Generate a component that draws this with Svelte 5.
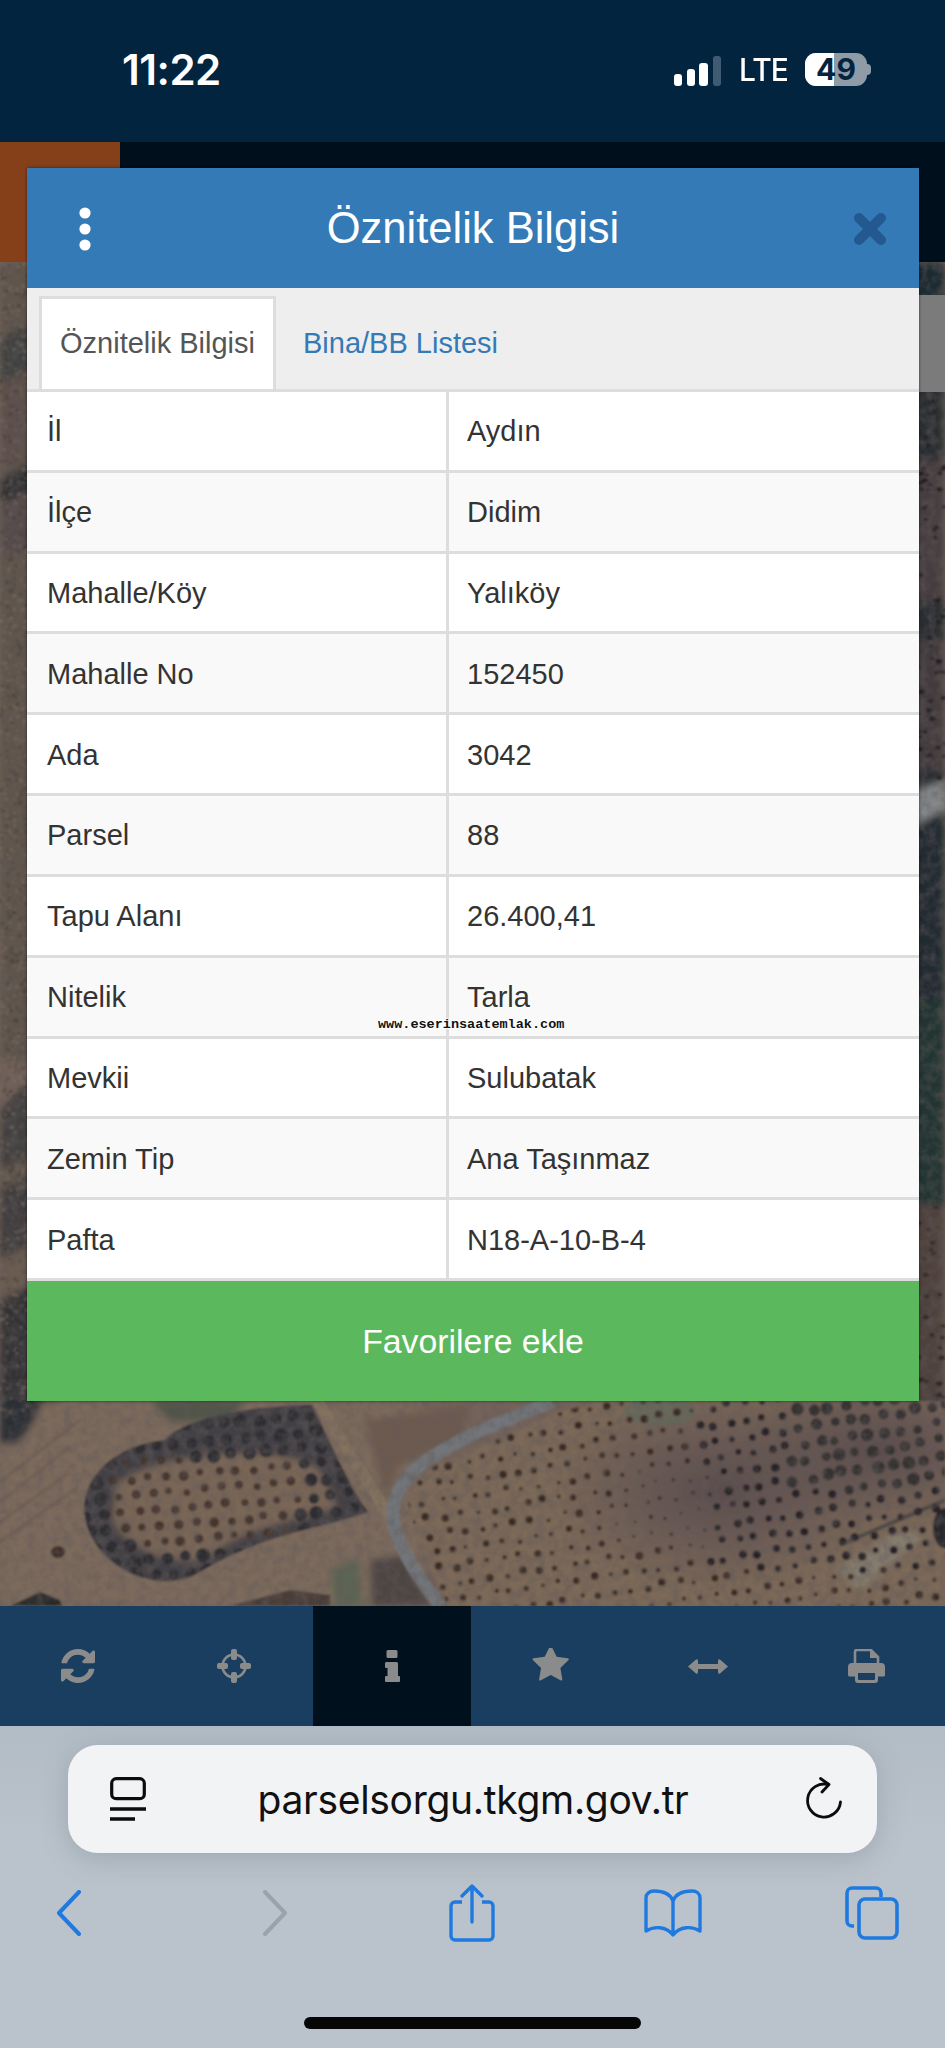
<script>
  const rows = [
    ['İl', 'Aydın'], ['İlçe', 'Didim'], ['Mahalle/Köy', 'Yalıköy'], ['Mahalle No', '152450'],
    ['Ada', '3042'], ['Parsel', '88'], ['Tapu Alanı', '26.400,41'], ['Nitelik', 'Tarla'],
    ['Mevkii', 'Sulubatak'], ['Zemin Tip', 'Ana Taşınmaz'], ['Pafta', 'N18-A-10-B-4']
  ];
  let seed = 12345;
  const r = () => (seed = (seed * 16807) % 2147483647) / 2147483647;

  const fieldDots = [];
  for (let i = -4; i < 40; i++) for (let j = -8; j < 28; j++) {
    const x = 400 + i * 16.5 + j * 3.5 + r() * 6;
    const y = 1400 + j * 16.5 - i * 2.5 + r() * 6;
    const big = x > 790 && y < 1490;
    const mid = x > 700 && y < 1570;
    const small = x > 610 && x < 710 && y > 1470 && y < 1550;
    fieldDots.push({ x, y, rad: big ? 4.2 + r() * 2.4 : small ? 1 + r() * 1.3 : mid ? 2.8 + r() * 1.6 : 1.8 + r() * 2.2, fill: big ? '#353133' : mid ? '#272226' : '#382b24' });
  }
  const orchardDots = [];
  for (let i = -2; i < 20; i++) for (let j = -2; j < 14; j++) {
    const x = 95 + i * 17.5 + j * 4 + r() * 4;
    const y = 1415 + j * 16 - i * 1.5 + r() * 4;
    const upper = y < 1458 || x > 300 || y > 1545 || x < 112;
    orchardDots.push({ x, y, rad: upper ? 5 + r() * 2.5 : 3.4 + r() * 1.8, fill: upper ? '#2f2e33' : '#44362d' });
  }
  const edgeSpecks = [];
  for (let k = 0; k < 1300; k++) {
    edgeSpecks.push({ x: r() * 28, y: 262 + r() * 1150, rad: 0.7 + r() * 1.3, fill: r() > 0.5 ? '#7f7366' : '#3e3732' });
  }
  const rightDots = [];
  for (let k = 0; k < 110; k++) {
    const y = 395 + r() * 1010;
    if (y > 780 && y < 1205) continue;
    rightDots.push({ x: 918 + r() * 28, y, rad: 1.3 + r() * 1.2 });
  }
</script>

<div class="page">
  <header class="status">
    <span class="time">11:22</span>
    <div class="status-right">
      <svg class="signal" width="47" height="30" viewBox="0 0 47 30" aria-hidden="true">
        <rect x="0" y="18" width="8" height="12" rx="3" fill="#fff" />
        <rect x="13" y="13" width="8" height="17" rx="3" fill="#fff" />
        <rect x="25" y="7" width="9" height="23" rx="3" fill="#fff" />
        <rect x="39" y="0" width="8" height="30" rx="3" fill="#3f5a73" />
      </svg>
      <span class="lte">LTE</span>
      <div class="battery"><span class="batt-fill"></span><span class="batt-num">49</span></div>
      <span class="nub"></span>
    </div>
  </header>

  <main class="stage">
    <div class="topstrip"><span class="orange"></span></div>

    <svg class="map" viewBox="0 262 945 1344" preserveAspectRatio="none" aria-hidden="true">
      <defs>
        <filter id="soft" x="-5%" y="-5%" width="110%" height="110%"><feGaussianBlur stdDeviation="1.2" /></filter>
        <filter id="softer" x="-5%" y="-5%" width="110%" height="110%"><feGaussianBlur stdDeviation="3.5" /></filter>
        <filter id="grain" x="0" y="0" width="100%" height="100%">
          <feTurbulence type="fractalNoise" baseFrequency="0.11" numOctaves="3" seed="4" />
          <feColorMatrix values="0 0 0 0 0.12  0 0 0 0 0.1  0 0 0 0 0.1  1.8 0 0 0 -0.62" />
        </filter>
        <clipPath id="field"><polygon points="405,1492 430,1468 560,1412 600,1401 945,1401 945,1606 448,1606 420,1545" /></clipPath>
        <clipPath id="blob"><path d="M85 1500 C90 1470 120 1445 165 1440 C180 1420 250 1405 312 1405 C330 1440 345 1480 368 1512 C320 1530 270 1530 200 1572 C170 1590 130 1580 105 1555 C90 1540 82 1520 85 1500Z" /></clipPath>
        <radialGradient id="purple" cx="0.5" cy="0.5" r="0.5">
          <stop offset="0" stop-color="#5a4c4e" /><stop offset="1" stop-color="#5a4c4e" stop-opacity="0" />
        </radialGradient>
      </defs>
      <g filter="url(#soft)">
        <rect x="0" y="262" width="945" height="1344" fill="#75645a" />
        <g filter="url(#softer)">
          <!-- left edge strip -->
          <rect x="0" y="262" width="60" height="800" fill="#5f544b" />
          <polygon points="0,340 60,310 60,360 0,382" fill="#3c403f" />
          <polygon points="0,382 60,360 60,450 0,470" fill="#5d504b" />
          <polygon points="0,478 60,452 60,478 0,505" fill="#2f2f30" />
          <polygon points="0,505 60,478 60,540 0,560" fill="#574b4b" />
          <polygon points="0,1110 60,1050 60,1140 0,1170" fill="#423f3f" />
          <polygon points="0,1170 60,1140 60,1160 0,1190" fill="#5f5448" />
          <polygon points="0,1190 60,1160 60,1230 0,1260" fill="#403e3f" />
          <polygon points="0,1260 60,1230 60,1270 0,1300" fill="#6a5c50" />
          <polygon points="0,1300 60,1270 60,1410 0,1410" fill="#303036" />
          <!-- right edge strip -->
          <rect x="905" y="262" width="40" height="1150" fill="#2c2e33" />
          <rect x="905" y="262" width="40" height="40" fill="#1b2c30" />
          <rect x="905" y="460" width="40" height="140" fill="#463e40" />
          <rect x="905" y="640" width="40" height="130" fill="#433b3e" />
          <polygon points="905,795 945,780 945,810 905,830" fill="#84888a" />
          <polygon points="905,830 945,810 945,1000 905,1000" fill="#222c33" />
          <rect x="905" y="1000" width="40" height="205" fill="#203532" />
          <rect x="905" y="1205" width="40" height="210" fill="#4f433c" />
          <!-- left field and patches -->
          <rect x="0" y="1401" width="420" height="205" fill="#7c6a5c" />
          <path d="M0 1396 H45 L32 1425 L18 1444 H0Z" fill="#2c2d36" />
          <path d="M150 1400 H245 L230 1422 H170Z" fill="#4f5449" />
          <path d="M365 1420 L470 1405 L460 1440 L400 1465 L385 1500Z" fill="#6d5a4f" />
          <path d="M370 1560 L405 1555 L432 1606 H372Z" fill="#4e4443" />
          <path d="M330 1570 L358 1558 L363 1606 H335Z" fill="#5c6553" />
          <path d="M200 1600 L290 1558 L290 1606 H200Z" fill="#7c6a5c" />
        </g>
        {#each edgeSpecks as d}<circle cx={d.x} cy={d.y} r={d.rad} fill={d.fill} opacity="0.5" />{/each}
        {#each rightDots as d}<ellipse cx={d.x} cy={d.y} rx={d.rad + 1} ry={d.rad} fill="#17161a" opacity="0.75" />{/each}

        <path d="M0 1482 L80 1420 M0 1502 L70 1447 M0 1522 L70 1472 M0 1542 L78 1487" stroke="#6d5c52" stroke-width="3" fill="none" opacity="0.6" />

        <!-- orchard -->
        <g clip-path="url(#blob)">
          <rect x="70" y="1400" width="310" height="200" fill="#423f44" />
          <path d="M115 1485 C150 1452 285 1440 320 1470 L338 1508 C290 1522 240 1530 205 1560 C170 1566 125 1550 112 1520Z" fill="#7a6656" filter="url(#softer)" />
          {#each orchardDots as d}<circle cx={d.x} cy={d.y} r={d.rad} fill={d.fill} />{/each}
        </g>

        <path d="M318 1401 L385 1510 L425 1585" stroke="#85745f" stroke-width="11" fill="none" opacity="0.8" />
        <ellipse cx="58" cy="1552" rx="7" ry="6" fill="#3a2e26" />
        <path d="M10 1606 L40 1592 L60 1600 L62 1606Z" fill="#2c2a2a" />
        <path d="M230 1606 L290 1590 L330 1595 L330 1606Z" fill="#4a3e38" />

        <!-- right orchard field -->
        <g clip-path="url(#field)">
          <rect x="400" y="1400" width="545" height="210" fill="#7c6958" />
          <ellipse cx="720" cy="1490" rx="170" ry="100" fill="url(#purple)" />
          <ellipse cx="880" cy="1450" rx="150" ry="80" fill="url(#purple)" />
          <ellipse cx="660" cy="1412" rx="36" ry="14" fill="#5d6a5e" opacity="0.6" />
          <path d="M835 1570 L900 1530 L925 1535 L860 1590Z" fill="#8c8b80" opacity="0.55" filter="url(#softer)" />
          <path d="M840 1545 L945 1500" stroke="#3c3a3a" stroke-width="4" opacity="0.7" />
          {#each fieldDots as d}<circle cx={d.x} cy={d.y} r={d.rad} fill={d.fill} />{/each}
        </g>
        <ellipse cx="945" cy="1528" rx="12" ry="20" fill="#26262b" />

        <path d="M552 1401 C505 1422 470 1432 430 1458 C398 1480 388 1505 395 1530 C405 1560 425 1585 440 1606" stroke="#72767a" stroke-width="13" fill="none" />
      </g>
      <rect x="0" y="262" width="945" height="1344" filter="url(#grain)" opacity="0.55" />
    </svg>
    <div class="grey-panel"></div>

    <section class="modal">
      <div class="m-head">
        <svg class="m-dots" width="14" height="44" viewBox="0 0 14 44" aria-hidden="true">
          <circle cx="7" cy="6" r="5.6" fill="#fff" /><circle cx="7" cy="22" r="5.6" fill="#fff" /><circle cx="7" cy="38" r="5.6" fill="#fff" />
        </svg>
        <h1>Öznitelik Bilgisi</h1>
        <svg class="m-close" width="32" height="32" viewBox="0 0 32 32" aria-hidden="true">
          <path d="M5 5 L27 27 M27 5 L5 27" stroke="#24598f" stroke-width="10" stroke-linecap="round" />
        </svg>
      </div>
      <div class="tabs">
        <span class="tab active">Öznitelik Bilgisi</span>
        <span class="tab">Bina/BB Listesi</span>
      </div>
      <div class="table">
        {#each rows as row, i}
          <div class="row" class:alt={i % 2 === 1}>
            <span class="cell first">{row[0]}</span>
            <span class="cell">{row[1]}</span>
          </div>
        {/each}
      </div>
      <button class="fav">Favorilere ekle</button>
      <span class="watermark">www.eserinsaatemlak.com</span>
    </section>
  </main>

  <nav class="bar">
    <div class="item">
      <svg width="34" height="34" viewBox="0 0 1536 1536" aria-hidden="true"><path fill="#8b8b8b" d="M1511 928q0 5-1 7-64 268-268 434.5t-478 166.5q-146 0-282.5-55t-243.5-157l-129 129q-19 19-45 19t-45-19-19-45v-448q0-26 19-45t45-19h448q26 0 45 19t19 45-19 45l-137 137q71 66 161 102t187 36q134 0 250-65t186-179q11-17 53-117 8-23 30-23h192q13 0 22.5 9.5t9.5 22.5zm25-800v448q0 26-19 45t-45 19h-448q-26 0-45-19t-19-45 19-45l138-138q-148-137-349-137-134 0-250 65t-186 179q-11 17-53 117-8 23-30 23h-199q-13 0-22.5-9.5t-9.5-22.5v-7q65-268 270-434.5t480-166.5q146 0 284 55.5t245 156.5l130-129q19-19 45-19t45 19 19 45z" /></svg>
    </div>
    <div class="item">
      <svg width="34" height="34" viewBox="0 0 34 34" aria-hidden="true">
        <circle cx="17" cy="17" r="11.5" fill="none" stroke="#8b8b8b" stroke-width="2.6" />
        <g fill="#8b8b8b"><rect x="14" y="0" width="6" height="11" rx="2" /><rect x="14" y="23" width="6" height="11" rx="2" /><rect x="0" y="14" width="11" height="6" rx="2" /><rect x="23" y="14" width="11" height="6" rx="2" /></g>
      </svg>
    </div>
    <div class="item on">
      <svg width="15" height="32" viewBox="0 0 15 32" aria-hidden="true">
        <path fill="#8b8b8b" d="M3 0h8a1.500 1.500 0 0 1 1.500 1.500v5a1.500 1.500 0 0 1-1.500 1.500H3a1.500 1.500 0 0 1-1.500-1.500v-5A1.500 1.500 0 0 1 3 0zM1.500 12h10a1.500 1.500 0 0 1 1.500 1.500V26h1a1 1 0 0 1 1 1v4a1 1 0 0 1-1 1H1a1 1 0 0 1-1-1v-4a1 1 0 0 1 1-1h1.500v-8H1a1 1 0 0 1-1-1v-4a1.500 1.500 0 0 1 1.500-1z" />
      </svg>
    </div>
    <div class="item">
      <svg width="38" height="36" viewBox="0 128 1728 1650" aria-hidden="true"><path fill="#8b8b8b" d="M1728 647q0 22-26 48l-363 354 86 500q1 7 1 20 0 21-10.500 35.500t-30.500 14.500q-19 0-40-12l-449-236-449 236q-22 12-40 12-21 0-31.500-14.500t-10.500-35.500q0-6 2-20l86-500-364-354q-25-27-25-48 0-37 56-46l502-73 225-455q19-41 49-41t49 41l225 455 502 73q56 9 56 46z" /></svg>
    </div>
    <div class="item">
      <svg width="40" height="15" viewBox="0 0 40 15" aria-hidden="true"><path fill="#8b8b8b" d="M0 7.500 L8 0.500 Q10 -0.500 10 2 V5 H30 V2 Q30 -0.500 32 0.500 L40 7.500 L32 14.500 Q30 15.500 30 13 V10 H10 V13 Q10 15.500 8 14.500Z" /></svg>
    </div>
    <div class="item">
      <svg width="37" height="34" viewBox="0 0 37 34" aria-hidden="true">
        <path d="M7 14 V3 a2 2 0 0 1 2-2 H23 L30 8 V14" fill="none" stroke="#8b8b8b" stroke-width="2.6" />
        <path d="M22 1.500 V9 H30" fill="#8b8b8b" />
        <path fill="#8b8b8b" fill-rule="evenodd" d="M4 14 H33 a4 4 0 0 1 4 4 V26 a1.500 1.500 0 0 1-1.500 1.500 H30 V31 a3 3 0 0 1-3 3 H10 a3 3 0 0 1-3-3 V27.500 H1.500 A1.500 1.500 0 0 1 0 26 V18 a4 4 0 0 1 4-4z M10 24 V30 a1 1 0 0 0 1 1 H26 a1 1 0 0 0 1-1 V24z" />
      </svg>
    </div>
  </nav>

  <footer class="safari">
    <div class="addr">
      <svg width="36" height="44" viewBox="0 0 36 44" aria-hidden="true">
        <rect x="1.700" y="1.700" width="32.600" height="20" rx="4.500" fill="none" stroke="#0c0c0c" stroke-width="3.200" />
        <path d="M0 32 H36 M0 42 H25" stroke="#0c0c0c" stroke-width="3.600" />
      </svg>
      <span class="url">parselsorgu.tkgm.gov.tr</span>
      <svg width="38" height="44" viewBox="0 0 38 44" aria-hidden="true">
        <path d="M23 7.500 A16.500 16.500 0 1 0 35.500 25" fill="none" stroke="#0c0c0c" stroke-width="2.800" stroke-linecap="round" />
        <path d="M15.500 1.500 L24 7.500 L17 15" fill="none" stroke="#0c0c0c" stroke-width="2.800" stroke-linecap="round" stroke-linejoin="round" />
      </svg>
    </div>
    <div class="tools">
      <svg width="26" height="46" viewBox="0 0 26 46" aria-hidden="true"><path d="M23 2 L3 23 L23 44" fill="none" stroke="#1f7ae0" stroke-width="4" stroke-linecap="round" stroke-linejoin="round" /></svg>
      <svg width="26" height="46" viewBox="0 0 26 46" aria-hidden="true"><path d="M3 2 L23 23 L3 44" fill="none" stroke="#9aa3ab" stroke-width="4" stroke-linecap="round" stroke-linejoin="round" /></svg>
      <svg width="46" height="58" viewBox="0 0 46 58" aria-hidden="true">
        <path d="M13 18 H6 a4 4 0 0 0-4 4 V52 a4 4 0 0 0 4 4 H40 a4 4 0 0 0 4-4 V22 a4 4 0 0 0-4-4 H33" fill="none" stroke="#1f7ae0" stroke-width="3.400" />
        <path d="M23 38 V3 M13 12 L23 2 L33 12" fill="none" stroke="#1f7ae0" stroke-width="3.400" stroke-linecap="round" stroke-linejoin="round" />
      </svg>
      <svg width="58" height="48" viewBox="0 0 58 48" aria-hidden="true">
        <path d="M29 12 C26 4 18 2 10 2 C5 2 2 5 2 9 V42 C10 37 22 37 29 46 C36 37 48 37 56 42 V9 C56 5 53 2 48 2 C40 2 32 4 29 12 V44" fill="none" stroke="#1f7ae0" stroke-width="3.400" stroke-linejoin="round" />
      </svg>
      <svg width="54" height="54" viewBox="0 0 54 54" aria-hidden="true">
        <path d="M9 40 H7 a5 5 0 0 1-5-5 V7 a5 5 0 0 1 5-5 H31 a5 5 0 0 1 5 5 V11" fill="none" stroke="#1f7ae0" stroke-width="3.600" />
        <rect x="14" y="13" width="38" height="39" rx="6" fill="none" stroke="#1f7ae0" stroke-width="3.600" />
      </svg>
    </div>
    <div class="home"></div>
  </footer>
</div>

<style>
  :global(body) { margin: 0; background: #02243f; }
  .page { width: 945px; height: 2048px; display: flex; flex-direction: column; overflow: hidden; font-family: "Liberation Sans", Arial, sans-serif; }

  .status { height: 142px; flex: none; background: #02243f; display: flex; justify-content: space-between; align-items: flex-start; padding: 0 74px 0 122px; box-sizing: border-box; color: #fff; }
  .time { font-family: Inter, sans-serif; font-weight: 600; font-size: 42px; line-height: 46px; margin-top: 47px; letter-spacing: -0.5px; }
  .status-right { display: flex; align-items: center; margin-top: 53px; height: 33px; }
  .signal { margin-top: 3px; }
  .lte { font-family: Inter, sans-serif; font-weight: 500; font-size: 30px; line-height: 33px; margin-left: 18px; width: 66px; letter-spacing: -1px; transform: scaleY(1.05); }
  .battery { position: relative; width: 62px; height: 33px; border-radius: 11px; background: #8f9ca8; text-align: center; }
  .batt-fill { position: absolute; left: 0; top: 0; bottom: 0; width: 29px; background: #fff; border-radius: 11px 0 0 11px; }
  .batt-num { position: relative; display: block; font-family: Inter, sans-serif; font-weight: 700; font-size: 30px; line-height: 33px; color: #02243f; }
  .nub { width: 4px; height: 11px; border-radius: 0 4px 4px 0; background: #8f9ca8; }

  .stage { position: relative; height: 1464px; flex: none; background: #75645a; }
  .topstrip { position: relative; z-index: 1; height: 120px; background: #000f1c; }
  .orange { display: block; width: 120px; height: 120px; background: #85401a; }
  .map { position: absolute; left: 0; top: 120px; width: 945px; height: 1344px; }
  .grey-panel { position: absolute; left: 905px; top: 153px; width: 40px; height: 97px; background: #7b7b7b; }

  .modal { position: absolute; z-index: 2; left: 27px; top: 26px; width: 892px; box-shadow: 0 0 3px rgba(0, 0, 0, 0.55); background: #fff; }
  .m-head { position: relative; height: 120px; background: #337ab7; display: flex; align-items: center; justify-content: center; }
  .m-head h1 { margin: 0; font-weight: 400; font-size: 43.5px; color: #fff; }
  .m-dots { position: absolute; left: 51px; top: 39px; }
  .m-close { position: absolute; left: 827px; top: 45px; }
  .tabs { height: 104px; box-sizing: border-box; background: #eeeeef; padding: 8px 0 0 12px; display: flex; border-bottom: 3px solid #dddddd; }
  .tab { font-size: 29px; line-height: 95px; padding: 0 27px; color: #337ab7; }
  .tab.active { background: #fff; color: #555; border: 3px solid #dddddd; border-bottom: 0; padding: 0 18px; margin-bottom: -3px; height: 93px; box-sizing: border-box; line-height: 89px; }

  .table { height: 889px; display: grid; grid-template-rows: repeat(11, 1fr); }
  .row { display: grid; grid-template-columns: 422px 1fr; background: #fff; border-bottom: 3px solid #dddddd; color: #333; font-size: 29px; }
  .row.alt { background: #f9f9f9; }
  .cell { display: flex; align-items: center; padding: 2px 0 0 18px; }
  .cell.first { border-right: 3px solid #dddddd; padding-left: 20px; }

  .fav { display: block; width: 100%; height: 120px; border: 0; background: #5cb85c; color: #fff; font-family: inherit; font-size: 33.8px; padding: 0; }
  .watermark { position: absolute; left: 351px; top: 850px; font-family: "Liberation Mono", monospace; font-weight: 700; font-size: 13.500px; line-height: 14px; color: #111; text-shadow: 1px 0 0 #fff, -1px 0 0 #fff, 0 1px 0 #fff, 0 -1px 0 #fff; white-space: nowrap; }

  .bar { height: 120px; flex: none; background: #1a3e5f; display: grid; grid-template-columns: 155px 158px 158px 158px 158px 158px; }
  .item { display: flex; align-items: center; justify-content: center; }
  .item.on { background: #00101c; }

  .safari { position: relative; height: 322px; flex: none; background: linear-gradient(#b2bcc5, #bac3cb 35%); }
  .addr { position: absolute; left: 68px; top: 19px; width: 809px; height: 108px; box-sizing: border-box; padding: 0 34px 0 42px; border-radius: 30px; background: #f1f3f5; box-shadow: 0 6px 28px rgba(90, 100, 110, 0.28); display: flex; align-items: center; justify-content: space-between; }
  .url { font-family: Inter, sans-serif; font-size: 39px; color: #111; letter-spacing: -0.3px; margin-right: 5px; }
  .tools { position: absolute; left: 0; top: 155px; width: 945px; height: 64px; box-sizing: border-box; padding-left: 56px; display: grid; grid-template-columns: 206px 187px 195px 201px 54px; align-items: center; }
  .home { position: absolute; left: 304px; top: 291px; width: 337px; height: 12px; border-radius: 6px; background: #060606; }
</style>
